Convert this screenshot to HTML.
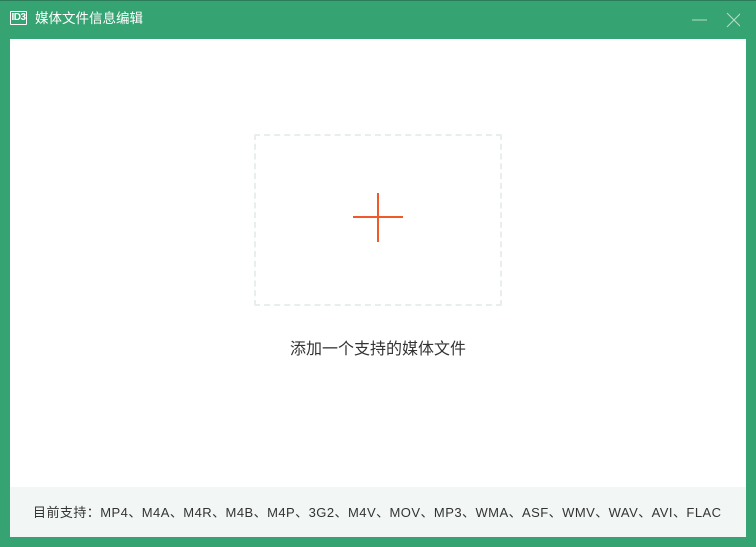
<!DOCTYPE html>
<html><head><meta charset="utf-8"><style>
body{margin:0;width:756px;height:547px;background:#36a372;position:relative;overflow:hidden;font-family:"Liberation Sans","Noto Sans CJK SC",sans-serif}
.top{position:absolute;left:0;top:0;width:756px;height:1px;background:#2a7d58}
.icon{position:absolute;left:10px;top:11px;width:15px;height:12px;border:1.5px solid #fff;border-radius:1px;color:#fff;font-size:10px;font-weight:bold;line-height:12px;text-align:center;letter-spacing:-0.5px}
.title{position:absolute;left:35px;top:10px;color:#fff;font-size:13.5px;line-height:18px}
.main{position:absolute;left:10px;top:39px;width:736px;height:498px;background:#fff}
.foot{position:absolute;left:10px;top:487px;width:736px;height:50px;background:#f2f7f5;color:#333;font-size:13px;letter-spacing:0.45px;line-height:52px;text-indent:23px;white-space:nowrap}
.box{position:absolute;left:254px;top:134px;width:244px;height:168px;border:2px dashed #e8eeec;border-radius:2px}
.h{position:absolute;left:353px;top:216px;width:50px;height:2px;background:#f05a28}
.v{position:absolute;left:377px;top:193px;width:2px;height:49px;background:#f05a28}
.lbl{position:absolute;left:0;width:756px;top:340px;text-align:center;color:#333;font-size:16px;line-height:20px}
</style></head><body>
<div class="top"></div>
<div class="icon">ID3</div>
<div class="title">媒体文件信息编辑</div>
<svg style="position:absolute;left:690px;top:12px" width="50" height="16"><line x1="2" y1="8" x2="17" y2="8" stroke="#b5dcc8" stroke-width="1"/><line x1="37" y1="1" x2="51" y2="15" stroke="#b5dcc8"/><line x1="51" y1="1" x2="37" y2="15" stroke="#b5dcc8"/></svg>
<div class="main"></div>
<div class="box"></div>
<div class="h"></div><div class="v"></div>
<div class="lbl">添加一个支持的媒体文件</div>
<div class="foot">目前支持：MP4、M4A、M4R、M4B、M4P、3G2、M4V、MOV、MP3、WMA、ASF、WMV、WAV、AVI、FLAC</div>
</body></html>
